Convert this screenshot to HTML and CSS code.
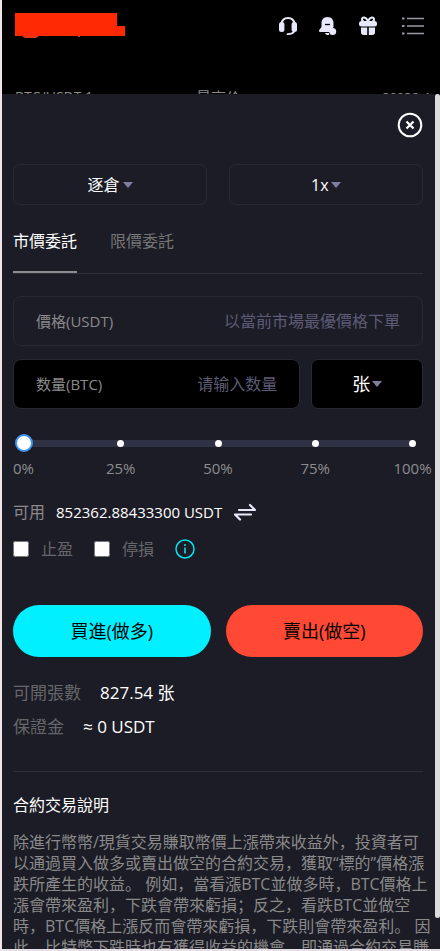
FILE: index.html
```html
<!DOCTYPE html>
<html lang="zh-CN">
<head>
<meta charset="utf-8">
<meta name="viewport" content="width=device-width, initial-scale=1">
<title>合約交易</title>
<link rel="stylesheet" href="styles.css">
</head>
<body>
<header class="topbar">
  <div class="topbar-row">
    <svg class="logo" viewBox="0 0 111 26" width="111" height="26" aria-hidden="true">
      <path fill="#ff2a04" d="M0 0h102v13h8v10H0z"/>
      <path fill="#e0361c" d="M7 23h17l-3 2H10zM63 23h2v1h-2z"/>
    </svg>
    <nav class="tools">
      <button type="button" aria-label="客服">
        <svg viewBox="0 0 20 20" width="20" height="20"><path d="M3.500 8C4 3.800 6.500 2 10 2s6 1.800 6.500 6" fill="none" stroke="#e8e8fc" stroke-width="2.200"/><rect x="1" y="6" width="5.400" height="10" rx="2.500" fill="#e8e8fc"/><rect x="13.600" y="6" width="5.400" height="10" rx="2.500" fill="#e8e8fc"/><path d="M16.500 14.500c-.8 2.800-3 3.700-7 3.700" fill="none" stroke="#e8e8fc" stroke-width="1.800" stroke-linecap="round"/></svg>
      </button>
      <button type="button" aria-label="通知">
        <svg viewBox="0 0 20 20" width="20" height="20"><path d="M9.500 1C5.500 1 3.500 3.800 3.500 7v4l-2.300 3c-.6 1 0 2 1 2h10.300l3-5V7c0-3.200-2-6-6-6z" fill="#e8e8fc"/><path d="M7 8.500h5" stroke="#000" stroke-width="1.300"/><path d="M7 17h4v2C8.500 19.300 7.500 18.500 7 17z" fill="#e8e8fc"/><circle cx="14.700" cy="15.500" r="3.500" fill="#e8e8fc"/></svg>
      </button>
      <button type="button" aria-label="禮物">
        <svg viewBox="0 0 20 20" width="20" height="20"><path d="M10 5C8 .8 4 .5 4 3.500c0 1.200.8 2 2 2M10 5c2-4.200 6-4.500 6-1.500 0 1.200-.8 2-2 2" fill="none" stroke="#e8e8fc" stroke-width="2"/><rect x="1" y="5" width="18" height="5.500" rx="2.500" fill="#e8e8fc"/><path d="M3 11.500h6.200V19H5.500C4 19 3 18 3 16.500zM10.800 11.500H17v5c0 1.500-1 2.500-2.500 2.500h-3.700z" fill="#e8e8fc"/></svg>
      </button>
      <button type="button" class="menu" aria-label="選單">
        <svg viewBox="0 0 24 20" width="24" height="20"><path d="M6 2.500h17M6 10h17M6 17.500h17" stroke="#9a9aa4" stroke-width="1.500"/><path d="M1 2.500h2.500M1 10h2.500M1 17.500h2.500" stroke="#9a9aa4" stroke-width="2"/></svg>
      </button>
    </nav>
  </div>
  <div class="ticker">
    <span>BTC/USDT 1</span>
    <span class="ticker-label">最高价</span>
    <span class="ticker-value">89938.4</span>
  </div>
</header>

<main class="sheet">
  <form class="content">
    <div class="close-row">
      <button type="button" class="close" aria-label="關閉">
        <svg viewBox="0 0 26 26" width="26" height="26" fill="none" stroke="#fff"><circle cx="13" cy="13" r="11.300" stroke-width="2"/><path d="M9.500 9.500l7 7M16.500 9.500l-7 7" stroke-width="2.200"/></svg>
      </button>
    </div>

    <div class="modes">
      <label class="picker">
        <select aria-label="倉位模式"><option>逐倉</option></select>
        <svg class="caret" viewBox="0 0 10 6" width="10" height="6"><path d="M0 0h10L5 6z"/></svg>
      </label>
      <label class="picker">
        <select aria-label="槓桿"><option>1x</option></select>
        <svg class="caret" viewBox="0 0 10 6" width="10" height="6"><path d="M0 0h10L5 6z"/></svg>
      </label>
    </div>

    <div class="tabs">
      <button type="button" class="tab active">市價委託</button>
      <button type="button" class="tab">限價委託</button>
    </div>

    <div class="field price">
      <label for="price">價格(USDT)</label>
      <input id="price" type="text" placeholder="以當前市場最優價格下單">
    </div>

    <div class="amount-row">
      <div class="field dark">
        <label for="amount">数量(BTC)</label>
        <input id="amount" type="text" placeholder="请输入数量">
      </div>
      <label class="picker unit dark">
        <select aria-label="單位"><option>张</option></select>
        <svg class="caret" viewBox="0 0 10 6" width="10" height="6"><path d="M0 0h10L5 6z"/></svg>
      </label>
    </div>

    <div class="slider">
      <div class="track">
        <div class="dots"><i></i><i></i><i></i><i></i><i></i></div>
        <input type="range" min="0" max="100" value="0" aria-label="數量百分比">
      </div>
      <div class="marks"><span>0%</span><span>25%</span><span>50%</span><span>75%</span><span>100%</span></div>
    </div>

    <div class="balance">
      <span class="muted">可用</span>
      <span class="balance-value">852362.88433300 USDT</span>
      <button type="button" aria-label="劃轉">
        <svg viewBox="0 0 24 18" width="24" height="18" fill="none" stroke="#e8e8fc" stroke-width="2.200" stroke-linecap="round" stroke-linejoin="round"><path d="M6 7h16L17 2M18 11.500H2l5 5"/></svg>
      </button>
    </div>

    <div class="stops">
      <label><input type="checkbox">止盈</label>
      <label><input type="checkbox">停損</label>
      <button type="button" class="info" aria-label="說明">
        <svg viewBox="0 0 20 20" width="20" height="20"><circle cx="10" cy="10" r="9" fill="none" stroke="#00e5f0" stroke-width="1.500"/><path d="M10 8.500v6" stroke="#00e5f0" stroke-width="1.600"/><circle cx="10" cy="6" r="1" fill="#00e5f0"/></svg>
      </button>
    </div>

    <div class="actions">
      <button type="button" class="buy">買進(做多)</button>
      <button type="button" class="sell">賣出(做空)</button>
    </div>

    <div class="stat"><span>可開張數</span><b>827.54 张</b></div>
    <div class="stat"><span>保證金</span><b>≈ 0 USDT</b></div>

    <section class="notes">
      <h2>合約交易說明</h2>
      <p>除進行幣幣/現貨交易賺取幣價上漲帶來收益外，投資者可<br>以通過買入做多或賣出做空的合約交易，獲取“標的”價格漲<br>跌所產生的收益。 例如，當看漲BTC並做多時，BTC價格上<br>漲會帶來盈利，下跌會帶來虧損；反之，看跌BTC並做空<br>時，BTC價格上漲反而會帶來虧損，下跌則會帶來盈利。 因<br>此，比特幣下跌時也有獲得收益的機會，即通過合約交易賺</p>
    </section>
  </form>
  <div class="scrollbar"><div class="thumb"></div></div>
</main>
</body>
</html>
```

FILE: styles.css
```css
* { box-sizing: border-box; }

body {
  margin: 0;
  height: 100vh;
  display: flex;
  flex-direction: column;
  overflow: hidden;
  border-left: 2px solid #f0e6e9;
  border-bottom: 2px solid #e6dfe6;
  background: #1c1c26;
  color: #fff;
  font: 16px/20px "Open Sans", "Noto Sans CJK SC", sans-serif;
}

button, input, select {
  margin: 0;
  padding: 0;
  border: 0;
  background: none;
  color: inherit;
  font: inherit;
}

svg { display: block; }

.topbar {
  flex: none;
  height: 94px;
  overflow: hidden;
  background: #000;
}

.topbar-row {
  display: flex;
  justify-content: space-between;
  align-items: center;
  height: 52px;
  padding: 0 15px 0 13px;
}

.tools {
  display: flex;
  align-items: center;
  gap: 20px;
}

.tools .menu { margin-left: 3px; }

.ticker {
  display: grid;
  grid-template-columns: 181px 1fr auto;
  padding: 35px 10px 0 13px;
  color: #8c8c8c;
  font-size: 14px;
}

.ticker-label { font-size: 15px; }

.ticker-value { font-size: 13px; }

.sheet {
  flex: 1;
  min-height: 0;
  display: flex;
}

.content {
  flex: 1;
  min-width: 0;
  padding: 0 12px 0 11px;
}

.close-row {
  display: flex;
  justify-content: flex-end;
  padding: 18px 0 26px;
}

.modes {
  display: grid;
  grid-template-columns: 1fr 1fr;
  gap: 22px;
}

.picker {
  display: flex;
  align-items: center;
  justify-content: center;
  gap: 2px;
  height: 41px;
  border: 1px solid #292936;
  border-radius: 7px;
}

.picker select {
  appearance: none;
  outline: 0;
}

.caret {
  fill: #7f7f9d;
}

.tabs {
  display: flex;
  gap: 33px;
  margin: 15px 0 22px;
  border-bottom: 1px solid #30303c;
}

.tab {
  height: 53px;
  padding-bottom: 10px;
  border-bottom: 2px solid transparent;
  color: #757575;
}

.tab.active {
  border-color: #8c8c90;
  color: #fff;
}

.field {
  display: flex;
  align-items: center;
  height: 50px;
  padding: 0 22px;
  border: 1px solid #292936;
  border-radius: 8px;
  color: #8a8a8a;
}

.field label {
  flex: none;
  font-size: 15px;
}

.field input {
  flex: 1;
  min-width: 0;
  text-align: right;
}

.field input::placeholder {
  color: #5c5b75;
  opacity: 1;
}

.amount-row {
  display: grid;
  grid-template-columns: 18fr 7fr;
  gap: 11px;
  margin-top: 13px;
}

.dark {
  height: 50px;
  background: #000;
}

.unit { font-size: 18px; }

.slider {
  margin: 24px 7px 0;
}

.track {
  display: grid;
  align-items: center;
  height: 20px;
}

.dots, .track input { grid-area: 1 / 1; }

.dots {
  display: flex;
  justify-content: space-between;
  align-items: center;
  height: 7px;
  border-radius: 4px;
  background: #2f3145;
}

.dots i {
  width: 7px;
  height: 7px;
  border-radius: 50%;
  background: #fff;
}

.track input {
  appearance: none;
  height: 18px;
  margin: 0 -5px;
}

.track input::-webkit-slider-thumb {
  appearance: none;
  width: 18px;
  height: 18px;
  border: 2px solid #3d94f6;
  border-radius: 50%;
  background: #fff;
}

.marks {
  display: flex;
  justify-content: space-between;
  margin-top: 5px;
  color: #8c8c90;
  font-size: 15px;
}

.marks span {
  display: flex;
  justify-content: center;
  width: 7px;
}

.balance {
  display: flex;
  align-items: center;
  margin-top: 24px;
}

.muted { color: #8a8a8a; }

.balance-value {
  margin: 0 11px;
  font-size: 15px;
}

.stops {
  display: flex;
  align-items: center;
  gap: 21px;
  margin-top: 17px;
  color: #66666a;
}

.stops label {
  display: flex;
  align-items: center;
  gap: 12px;
}

.stops input {
  width: 16px;
  height: 16px;
}

.actions {
  display: grid;
  grid-template-columns: 1fr 1fr;
  gap: 15px;
  margin: 46px 0 19px;
}

.actions button {
  height: 52px;
  border-radius: 26px;
  color: #000;
  font-size: 18px;
}

.buy { background: #00f0ff; }
.sell { background: #ff4935; }

.stat {
  display: flex;
  align-items: center;
  gap: 19px;
  height: 34px;
  color: #66666a;
  font-size: 17px;
}

.stat b {
  color: #fff;
  font-weight: 400;
}

.notes {
  margin-top: 27px;
  border-top: 1px solid #30303c;
}

.notes h2 {
  margin: 23px 0 17px;
  font-size: 16px;
  font-weight: 400;
}

.notes p {
  margin: 0;
  color: #8a8a8a;
  line-height: 21px;
  white-space: nowrap;
}

.scrollbar {
  flex: none;
  display: flex;
  flex-direction: column;
  width: 5px;
  padding-bottom: 31px;
}

.thumb {
  flex: 1;
  border-radius: 3px;
  background: #dcdcdc;
}
```
